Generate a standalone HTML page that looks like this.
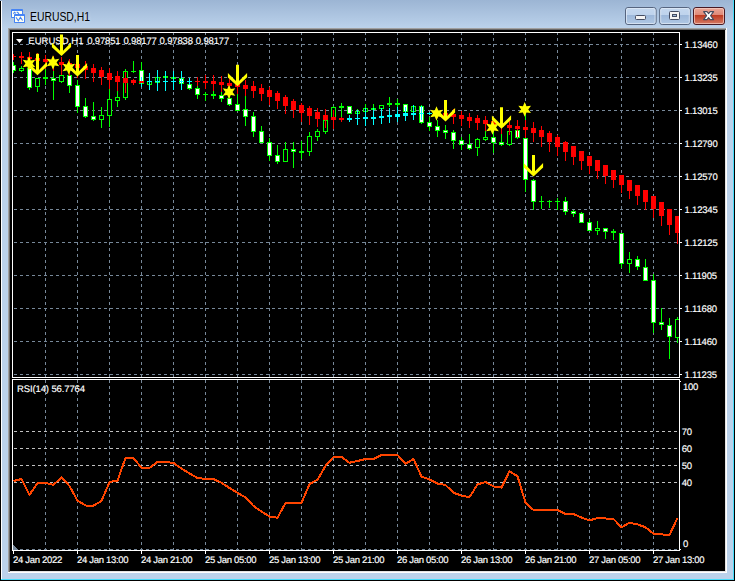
<!DOCTYPE html>
<html><head><meta charset="utf-8"><title>EURUSD,H1</title>
<style>
html,body{margin:0;padding:0;background:#fff;overflow:hidden}
#w{position:relative;width:737px;height:582px;overflow:hidden;background:#fff;font-family:"Liberation Sans",sans-serif}
#w svg{position:absolute;left:0;top:0}
.t{position:absolute;white-space:pre;font:9.5px/12px "Liberation Sans",sans-serif;color:#fff;text-rendering:geometricPrecision;-webkit-text-stroke:0.16px #fff}
#title{position:absolute;left:29.8px;top:9px;font-size:12px;line-height:16px;color:#000;white-space:pre;transform-origin:0 0;transform:scaleX(0.865);text-shadow:0 0 4px rgba(255,255,255,.6)}
</style></head><body>
<div id="w">
<svg width="737" height="582" viewBox="0 0 737 582" shape-rendering="crispEdges">
<defs>
<linearGradient id="tg" x1="0" y1="0" x2="0" y2="1"><stop offset="0" stop-color="#9cb5d4"/><stop offset="1" stop-color="#bbd2eb"/></linearGradient>
<linearGradient id="b1" x1="0" y1="0" x2="0" y2="1"><stop offset="0" stop-color="#c5d8ef"/><stop offset="0.45" stop-color="#bed3ec"/><stop offset="0.46" stop-color="#9db8da"/><stop offset="1" stop-color="#b1c9e5"/></linearGradient>
<linearGradient id="b2" x1="0" y1="0" x2="0" y2="1"><stop offset="0" stop-color="#ebaa9b"/><stop offset="0.45" stop-color="#de8776"/><stop offset="0.46" stop-color="#be3a20"/><stop offset="1" stop-color="#d67e68"/></linearGradient>
<clipPath id="cm"><rect x="13" y="33" width="666" height="344"/></clipPath>
</defs>
<!-- window frame -->
<rect x="0" y="0" width="735" height="581" fill="#000"/>
<rect x="1" y="0" width="733" height="580" fill="#bbd2eb"/>
<rect x="1" y="0" width="733" height="28" fill="url(#tg)"/>
<rect x="0" y="0" width="1" height="1" fill="#9cb5d4"/>
<rect x="1" y="1" width="1" height="579" fill="#fff"/>
<rect x="733" y="0" width="1" height="580" fill="#46dcfa"/>
<rect x="1" y="579" width="733" height="1" fill="#46dcfa"/>
<!-- client edge -->
<rect x="8" y="28" width="719" height="545" fill="#a0a0a0"/>
<rect x="9" y="29" width="718" height="544" fill="#696969"/>
<rect x="9" y="572" width="718" height="1" fill="#fff"/><rect x="726" y="29" width="1" height="544" fill="#fff"/>
<rect x="8" y="572" width="1" height="1" fill="#fff"/><rect x="726" y="28" width="1" height="1" fill="#fff"/>
<rect x="10" y="571" width="716" height="1" fill="#e3e3e3"/><rect x="725" y="30" width="1" height="542" fill="#e3e3e3"/>
<rect x="10" y="30" width="715" height="541" fill="#000"/>
<!-- caption buttons -->
<g shape-rendering="geometricPrecision">
<rect x="625.5" y="7.5" width="30.6" height="17" rx="2.5" fill="url(#b1)" stroke="#56657f"/>
<rect x="626.5" y="8.5" width="28.6" height="15" rx="1.5" fill="none" stroke="#e1ebf7" stroke-opacity=".75"/>
<rect x="635.5" y="15.5" width="10" height="4" rx="1" fill="#f4f4f4" stroke="#454d62"/>
<rect x="659.7" y="7.5" width="30.6" height="17" rx="2.5" fill="url(#b1)" stroke="#56657f"/>
<rect x="660.7" y="8.5" width="28.6" height="15" rx="1.5" fill="none" stroke="#e1ebf7" stroke-opacity=".75"/>
<rect x="669.5" y="11.5" width="10" height="8" rx="1" fill="#f4f4f4" stroke="#454d62"/>
<rect x="672.5" y="14.5" width="4" height="2" fill="#9db8da" stroke="#454d62"/>
<rect x="693.5" y="7.5" width="31" height="17" rx="2.5" fill="url(#b2)" stroke="#471923"/>
<rect x="694.5" y="8.5" width="29" height="15" rx="1.5" fill="none" stroke="#f6cfc5" stroke-opacity=".7"/>
<path d="M703.6 11.6 L707 11.6 L708.6 13.6 L710.2 11.6 L713.6 11.6 L710.6 15.6 L713.6 19.6 L710.2 19.6 L708.6 17.6 L707 19.6 L703.6 19.6 L706.6 15.6 Z" fill="#fff" stroke="#474b5e" stroke-width="1.1" stroke-linejoin="round"/>
<!-- icon -->
<rect x="11" y="9" width="12" height="9" rx="0.8" fill="#4684f4"/><rect x="12" y="11" width="10" height="6" fill="#fffff2"/>
<path d="M13.3 13.6 l1.3 -1.3 l1.2 1 M16.6 12.3 l1 0 l1.4 1.6" fill="none" stroke="#4684f4" stroke-width="1.1"/>
<rect x="14" y="14" width="11" height="9" rx="0.8" fill="#4684f4"/><rect x="15" y="16" width="9" height="6" fill="#fffff2"/>
<path d="M16 17.3 l2.3 3.4 l2.1 -3.4 l2.2 3.2" fill="none" stroke="#4684f4" stroke-width="1.1"/>
</g>
<line x1="14" y1="44.5" x2="679" y2="44.5" stroke="#778899" stroke-dasharray="3 3"/>
<line x1="14" y1="77.5" x2="679" y2="77.5" stroke="#778899" stroke-dasharray="3 3"/>
<line x1="14" y1="110.5" x2="679" y2="110.5" stroke="#778899" stroke-dasharray="3 3"/>
<line x1="14" y1="143.5" x2="679" y2="143.5" stroke="#778899" stroke-dasharray="3 3"/>
<line x1="14" y1="176.5" x2="679" y2="176.5" stroke="#778899" stroke-dasharray="3 3"/>
<line x1="14" y1="209.5" x2="679" y2="209.5" stroke="#778899" stroke-dasharray="3 3"/>
<line x1="14" y1="242.5" x2="679" y2="242.5" stroke="#778899" stroke-dasharray="3 3"/>
<line x1="14" y1="275.5" x2="679" y2="275.5" stroke="#778899" stroke-dasharray="3 3"/>
<line x1="14" y1="308.5" x2="679" y2="308.5" stroke="#778899" stroke-dasharray="3 3"/>
<line x1="14" y1="341.5" x2="679" y2="341.5" stroke="#778899" stroke-dasharray="3 3"/>
<line x1="14" y1="374.5" x2="679" y2="374.5" stroke="#778899" stroke-dasharray="3 3"/>
<line x1="45.5" y1="32" x2="45.5" y2="377" stroke="#778899" stroke-dasharray="3 3"/>
<line x1="45.5" y1="380" x2="45.5" y2="550" stroke="#778899" stroke-dasharray="3 3"/>
<line x1="77.5" y1="32" x2="77.5" y2="377" stroke="#778899" stroke-dasharray="3 3"/>
<line x1="77.5" y1="380" x2="77.5" y2="550" stroke="#778899" stroke-dasharray="3 3"/>
<line x1="109.5" y1="32" x2="109.5" y2="377" stroke="#778899" stroke-dasharray="3 3"/>
<line x1="109.5" y1="380" x2="109.5" y2="550" stroke="#778899" stroke-dasharray="3 3"/>
<line x1="141.5" y1="32" x2="141.5" y2="377" stroke="#778899" stroke-dasharray="3 3"/>
<line x1="141.5" y1="380" x2="141.5" y2="550" stroke="#778899" stroke-dasharray="3 3"/>
<line x1="173.5" y1="32" x2="173.5" y2="377" stroke="#778899" stroke-dasharray="3 3"/>
<line x1="173.5" y1="380" x2="173.5" y2="550" stroke="#778899" stroke-dasharray="3 3"/>
<line x1="205.5" y1="32" x2="205.5" y2="377" stroke="#778899" stroke-dasharray="3 3"/>
<line x1="205.5" y1="380" x2="205.5" y2="550" stroke="#778899" stroke-dasharray="3 3"/>
<line x1="237.5" y1="32" x2="237.5" y2="377" stroke="#778899" stroke-dasharray="3 3"/>
<line x1="237.5" y1="380" x2="237.5" y2="550" stroke="#778899" stroke-dasharray="3 3"/>
<line x1="269.5" y1="32" x2="269.5" y2="377" stroke="#778899" stroke-dasharray="3 3"/>
<line x1="269.5" y1="380" x2="269.5" y2="550" stroke="#778899" stroke-dasharray="3 3"/>
<line x1="301.5" y1="32" x2="301.5" y2="377" stroke="#778899" stroke-dasharray="3 3"/>
<line x1="301.5" y1="380" x2="301.5" y2="550" stroke="#778899" stroke-dasharray="3 3"/>
<line x1="333.5" y1="32" x2="333.5" y2="377" stroke="#778899" stroke-dasharray="3 3"/>
<line x1="333.5" y1="380" x2="333.5" y2="550" stroke="#778899" stroke-dasharray="3 3"/>
<line x1="365.5" y1="32" x2="365.5" y2="377" stroke="#778899" stroke-dasharray="3 3"/>
<line x1="365.5" y1="380" x2="365.5" y2="550" stroke="#778899" stroke-dasharray="3 3"/>
<line x1="397.5" y1="32" x2="397.5" y2="377" stroke="#778899" stroke-dasharray="3 3"/>
<line x1="397.5" y1="380" x2="397.5" y2="550" stroke="#778899" stroke-dasharray="3 3"/>
<line x1="429.5" y1="32" x2="429.5" y2="377" stroke="#778899" stroke-dasharray="3 3"/>
<line x1="429.5" y1="380" x2="429.5" y2="550" stroke="#778899" stroke-dasharray="3 3"/>
<line x1="461.5" y1="32" x2="461.5" y2="377" stroke="#778899" stroke-dasharray="3 3"/>
<line x1="461.5" y1="380" x2="461.5" y2="550" stroke="#778899" stroke-dasharray="3 3"/>
<line x1="493.5" y1="32" x2="493.5" y2="377" stroke="#778899" stroke-dasharray="3 3"/>
<line x1="493.5" y1="380" x2="493.5" y2="550" stroke="#778899" stroke-dasharray="3 3"/>
<line x1="525.5" y1="32" x2="525.5" y2="377" stroke="#778899" stroke-dasharray="3 3"/>
<line x1="525.5" y1="380" x2="525.5" y2="550" stroke="#778899" stroke-dasharray="3 3"/>
<line x1="557.5" y1="32" x2="557.5" y2="377" stroke="#778899" stroke-dasharray="3 3"/>
<line x1="557.5" y1="380" x2="557.5" y2="550" stroke="#778899" stroke-dasharray="3 3"/>
<line x1="589.5" y1="32" x2="589.5" y2="377" stroke="#778899" stroke-dasharray="3 3"/>
<line x1="589.5" y1="380" x2="589.5" y2="550" stroke="#778899" stroke-dasharray="3 3"/>
<line x1="621.5" y1="32" x2="621.5" y2="377" stroke="#778899" stroke-dasharray="3 3"/>
<line x1="621.5" y1="380" x2="621.5" y2="550" stroke="#778899" stroke-dasharray="3 3"/>
<line x1="653.5" y1="32" x2="653.5" y2="377" stroke="#778899" stroke-dasharray="3 3"/>
<line x1="653.5" y1="380" x2="653.5" y2="550" stroke="#778899" stroke-dasharray="3 3"/>
<line x1="14" y1="431.5" x2="679" y2="431.5" stroke="#c0c0c0" stroke-dasharray="3 3"/>
<line x1="14" y1="448.5" x2="679" y2="448.5" stroke="#c0c0c0" stroke-dasharray="3 3"/>
<line x1="14" y1="465.5" x2="679" y2="465.5" stroke="#c0c0c0" stroke-dasharray="3 3"/>
<line x1="14" y1="482.5" x2="679" y2="482.5" stroke="#c0c0c0" stroke-dasharray="3 3"/>
<line x1="14" y1="549.5" x2="679" y2="549.5" stroke="#778899" stroke-dasharray="3 3"/>
<g clip-path="url(#cm)">
<rect x="13" y="62" width="1" height="11" fill="#00ff00"/>
<rect x="11" y="65" width="5" height="6" fill="#00ff00"/>
<rect x="12" y="66" width="3" height="4" fill="#ffffff"/>
<rect x="21" y="66" width="1" height="6" fill="#00ff00"/>
<rect x="19" y="68" width="5" height="3" fill="#00ff00"/>
<rect x="20" y="69" width="3" height="1" fill="#000"/>
<rect x="29" y="64" width="1" height="26" fill="#00ff00"/>
<rect x="27" y="68" width="5" height="20" fill="#00ff00"/>
<rect x="28" y="69" width="3" height="18" fill="#ffffff"/>
<rect x="37" y="78" width="1" height="14" fill="#00ff00"/>
<rect x="35" y="78" width="5" height="9" fill="#00ff00"/>
<rect x="36" y="79" width="3" height="7" fill="#000"/>
<rect x="45" y="69" width="1" height="16" fill="#00ff00"/>
<rect x="43" y="77" width="5" height="2" fill="#00ff00"/>
<rect x="53" y="69" width="1" height="31" fill="#00ff00"/>
<rect x="51" y="78" width="5" height="3" fill="#00ff00"/>
<rect x="52" y="79" width="3" height="1" fill="#ffffff"/>
<rect x="61" y="73" width="1" height="10" fill="#00ff00"/>
<rect x="59" y="75" width="5" height="7" fill="#00ff00"/>
<rect x="60" y="76" width="3" height="5" fill="#000"/>
<rect x="69" y="72" width="1" height="21" fill="#00ff00"/>
<rect x="67" y="75" width="5" height="11" fill="#00ff00"/>
<rect x="68" y="76" width="3" height="9" fill="#ffffff"/>
<rect x="77" y="80" width="1" height="33" fill="#00ff00"/>
<rect x="75" y="85" width="5" height="22" fill="#00ff00"/>
<rect x="76" y="86" width="3" height="20" fill="#ffffff"/>
<rect x="85" y="98" width="1" height="20" fill="#00ff00"/>
<rect x="83" y="106" width="5" height="11" fill="#00ff00"/>
<rect x="84" y="107" width="3" height="9" fill="#ffffff"/>
<rect x="93" y="102" width="1" height="19" fill="#00ff00"/>
<rect x="91" y="116" width="5" height="4" fill="#00ff00"/>
<rect x="92" y="117" width="3" height="2" fill="#ffffff"/>
<rect x="101" y="107" width="1" height="21" fill="#00ff00"/>
<rect x="99" y="115" width="5" height="5" fill="#00ff00"/>
<rect x="100" y="116" width="3" height="3" fill="#000"/>
<rect x="109" y="89" width="1" height="38" fill="#00ff00"/>
<rect x="107" y="99" width="5" height="17" fill="#00ff00"/>
<rect x="108" y="100" width="3" height="15" fill="#000"/>
<rect x="117" y="91" width="1" height="16" fill="#00ff00"/>
<rect x="115" y="97" width="5" height="4" fill="#00ff00"/>
<rect x="116" y="98" width="3" height="2" fill="#000"/>
<rect x="125" y="69" width="1" height="31" fill="#00ff00"/>
<rect x="123" y="71" width="5" height="27" fill="#00ff00"/>
<rect x="124" y="72" width="3" height="25" fill="#000"/>
<rect x="133" y="61" width="1" height="12" fill="#00ff00"/>
<rect x="131" y="71" width="5" height="1" fill="#00ff00"/>
<rect x="141" y="62" width="1" height="25" fill="#00ff00"/>
<rect x="139" y="70" width="5" height="14" fill="#00ff00"/>
<rect x="140" y="71" width="3" height="12" fill="#ffffff"/>
<rect x="149" y="79" width="1" height="8" fill="#00ff00"/>
<rect x="147" y="81" width="5" height="4" fill="#00ff00"/>
<rect x="148" y="82" width="3" height="2" fill="#000"/>
<rect x="157" y="75" width="1" height="10" fill="#00ff00"/>
<rect x="155" y="77" width="5" height="6" fill="#00ff00"/>
<rect x="156" y="78" width="3" height="4" fill="#000"/>
<rect x="165" y="74" width="1" height="6" fill="#00ff00"/>
<rect x="163" y="76" width="5" height="2" fill="#00ff00"/>
<rect x="173" y="75" width="1" height="6" fill="#00ff00"/>
<rect x="171" y="77" width="5" height="2" fill="#00ff00"/>
<rect x="181" y="76" width="1" height="9" fill="#00ff00"/>
<rect x="179" y="78" width="5" height="6" fill="#00ff00"/>
<rect x="180" y="79" width="3" height="4" fill="#ffffff"/>
<rect x="189" y="82" width="1" height="8" fill="#00ff00"/>
<rect x="187" y="84" width="5" height="5" fill="#00ff00"/>
<rect x="188" y="85" width="3" height="3" fill="#ffffff"/>
<rect x="197" y="85" width="1" height="14" fill="#00ff00"/>
<rect x="195" y="88" width="5" height="7" fill="#00ff00"/>
<rect x="196" y="89" width="3" height="5" fill="#ffffff"/>
<rect x="205" y="92" width="1" height="9" fill="#00ff00"/>
<rect x="203" y="94" width="5" height="1" fill="#00ff00"/>
<rect x="213" y="91" width="1" height="8" fill="#00ff00"/>
<rect x="211" y="94" width="5" height="2" fill="#00ff00"/>
<rect x="221" y="92" width="1" height="10" fill="#00ff00"/>
<rect x="219" y="95" width="5" height="4" fill="#00ff00"/>
<rect x="220" y="96" width="3" height="2" fill="#ffffff"/>
<rect x="229" y="96" width="1" height="10" fill="#00ff00"/>
<rect x="227" y="98" width="5" height="7" fill="#00ff00"/>
<rect x="228" y="99" width="3" height="5" fill="#ffffff"/>
<rect x="237" y="94" width="1" height="17" fill="#00ff00"/>
<rect x="235" y="104" width="5" height="7" fill="#00ff00"/>
<rect x="236" y="105" width="3" height="5" fill="#ffffff"/>
<rect x="245" y="96" width="1" height="30" fill="#00ff00"/>
<rect x="243" y="109" width="5" height="8" fill="#00ff00"/>
<rect x="244" y="110" width="3" height="6" fill="#ffffff"/>
<rect x="253" y="112" width="1" height="25" fill="#00ff00"/>
<rect x="251" y="116" width="5" height="16" fill="#00ff00"/>
<rect x="252" y="117" width="3" height="14" fill="#ffffff"/>
<rect x="261" y="126" width="1" height="17" fill="#00ff00"/>
<rect x="259" y="131" width="5" height="12" fill="#00ff00"/>
<rect x="260" y="132" width="3" height="10" fill="#ffffff"/>
<rect x="269" y="138" width="1" height="23" fill="#00ff00"/>
<rect x="267" y="142" width="5" height="14" fill="#00ff00"/>
<rect x="268" y="143" width="3" height="12" fill="#ffffff"/>
<rect x="277" y="145" width="1" height="19" fill="#00ff00"/>
<rect x="275" y="155" width="5" height="7" fill="#00ff00"/>
<rect x="276" y="156" width="3" height="5" fill="#ffffff"/>
<rect x="285" y="142" width="1" height="20" fill="#00ff00"/>
<rect x="283" y="149" width="5" height="13" fill="#00ff00"/>
<rect x="284" y="150" width="3" height="11" fill="#000"/>
<rect x="293" y="142" width="1" height="26" fill="#00ff00"/>
<rect x="291" y="149" width="5" height="3" fill="#00ff00"/>
<rect x="292" y="150" width="3" height="1" fill="#ffffff"/>
<rect x="301" y="141" width="1" height="18" fill="#00ff00"/>
<rect x="299" y="151" width="5" height="2" fill="#00ff00"/>
<rect x="309" y="132" width="1" height="24" fill="#00ff00"/>
<rect x="307" y="136" width="5" height="16" fill="#00ff00"/>
<rect x="308" y="137" width="3" height="14" fill="#000"/>
<rect x="317" y="129" width="1" height="12" fill="#00ff00"/>
<rect x="315" y="131" width="5" height="6" fill="#00ff00"/>
<rect x="316" y="132" width="3" height="4" fill="#000"/>
<rect x="325" y="109" width="1" height="25" fill="#00ff00"/>
<rect x="323" y="120" width="5" height="12" fill="#00ff00"/>
<rect x="324" y="121" width="3" height="10" fill="#000"/>
<rect x="333" y="106" width="1" height="12" fill="#00ff00"/>
<rect x="331" y="107" width="5" height="11" fill="#00ff00"/>
<rect x="332" y="108" width="3" height="9" fill="#000"/>
<rect x="341" y="103" width="1" height="15" fill="#00ff00"/>
<rect x="339" y="106" width="5" height="2" fill="#00ff00"/>
<rect x="349" y="106" width="1" height="8" fill="#00ff00"/>
<rect x="347" y="106" width="5" height="8" fill="#00ff00"/>
<rect x="348" y="107" width="3" height="6" fill="#ffffff"/>
<rect x="357" y="109" width="1" height="5" fill="#00ff00"/>
<rect x="355" y="111" width="5" height="3" fill="#00ff00"/>
<rect x="356" y="112" width="3" height="1" fill="#000"/>
<rect x="365" y="104" width="1" height="8" fill="#00ff00"/>
<rect x="363" y="108" width="5" height="4" fill="#00ff00"/>
<rect x="364" y="109" width="3" height="2" fill="#000"/>
<rect x="373" y="104" width="1" height="7" fill="#00ff00"/>
<rect x="371" y="108" width="5" height="2" fill="#00ff00"/>
<rect x="381" y="105" width="1" height="4" fill="#00ff00"/>
<rect x="379" y="105" width="5" height="4" fill="#00ff00"/>
<rect x="380" y="106" width="3" height="2" fill="#000"/>
<rect x="389" y="97" width="1" height="10" fill="#00ff00"/>
<rect x="387" y="103" width="5" height="2" fill="#00ff00"/>
<rect x="397" y="99" width="1" height="8" fill="#00ff00"/>
<rect x="395" y="103" width="5" height="2" fill="#00ff00"/>
<rect x="405" y="104" width="1" height="8" fill="#00ff00"/>
<rect x="403" y="104" width="5" height="8" fill="#00ff00"/>
<rect x="404" y="105" width="3" height="6" fill="#ffffff"/>
<rect x="413" y="105" width="1" height="7" fill="#00ff00"/>
<rect x="411" y="106" width="5" height="6" fill="#00ff00"/>
<rect x="412" y="107" width="3" height="4" fill="#000"/>
<rect x="421" y="105" width="1" height="19" fill="#00ff00"/>
<rect x="419" y="106" width="5" height="17" fill="#00ff00"/>
<rect x="420" y="107" width="3" height="15" fill="#ffffff"/>
<rect x="429" y="117" width="1" height="14" fill="#00ff00"/>
<rect x="427" y="122" width="5" height="5" fill="#00ff00"/>
<rect x="428" y="123" width="3" height="3" fill="#ffffff"/>
<rect x="437" y="120" width="1" height="17" fill="#00ff00"/>
<rect x="435" y="126" width="5" height="5" fill="#00ff00"/>
<rect x="436" y="127" width="3" height="3" fill="#ffffff"/>
<rect x="445" y="125" width="1" height="14" fill="#00ff00"/>
<rect x="443" y="130" width="5" height="3" fill="#00ff00"/>
<rect x="444" y="131" width="3" height="1" fill="#ffffff"/>
<rect x="453" y="130" width="1" height="19" fill="#00ff00"/>
<rect x="451" y="132" width="5" height="9" fill="#00ff00"/>
<rect x="452" y="133" width="3" height="7" fill="#ffffff"/>
<rect x="461" y="137" width="1" height="13" fill="#00ff00"/>
<rect x="459" y="140" width="5" height="5" fill="#00ff00"/>
<rect x="460" y="141" width="3" height="3" fill="#ffffff"/>
<rect x="469" y="134" width="1" height="16" fill="#00ff00"/>
<rect x="467" y="144" width="5" height="5" fill="#00ff00"/>
<rect x="468" y="145" width="3" height="3" fill="#ffffff"/>
<rect x="477" y="138" width="1" height="18" fill="#00ff00"/>
<rect x="475" y="139" width="5" height="9" fill="#00ff00"/>
<rect x="476" y="140" width="3" height="7" fill="#000"/>
<rect x="485" y="131" width="1" height="10" fill="#00ff00"/>
<rect x="483" y="137" width="5" height="3" fill="#00ff00"/>
<rect x="484" y="138" width="3" height="1" fill="#000"/>
<rect x="493" y="130" width="1" height="23" fill="#00ff00"/>
<rect x="491" y="137" width="5" height="6" fill="#00ff00"/>
<rect x="492" y="138" width="3" height="4" fill="#ffffff"/>
<rect x="501" y="134" width="1" height="12" fill="#00ff00"/>
<rect x="499" y="142" width="5" height="3" fill="#00ff00"/>
<rect x="500" y="143" width="3" height="1" fill="#ffffff"/>
<rect x="509" y="129" width="1" height="17" fill="#00ff00"/>
<rect x="507" y="131" width="5" height="14" fill="#00ff00"/>
<rect x="508" y="132" width="3" height="12" fill="#000"/>
<rect x="517" y="128" width="1" height="11" fill="#00ff00"/>
<rect x="515" y="130" width="5" height="8" fill="#00ff00"/>
<rect x="516" y="131" width="3" height="6" fill="#ffffff"/>
<rect x="525" y="114" width="1" height="78" fill="#00ff00"/>
<rect x="523" y="138" width="5" height="42" fill="#00ff00"/>
<rect x="524" y="139" width="3" height="40" fill="#ffffff"/>
<rect x="533" y="179" width="1" height="31" fill="#00ff00"/>
<rect x="531" y="180" width="5" height="22" fill="#00ff00"/>
<rect x="532" y="181" width="3" height="20" fill="#ffffff"/>
<rect x="541" y="196" width="1" height="13" fill="#00ff00"/>
<rect x="539" y="201" width="5" height="1" fill="#00ff00"/>
<rect x="549" y="200" width="1" height="8" fill="#00ff00"/>
<rect x="547" y="201" width="5" height="1" fill="#00ff00"/>
<rect x="557" y="198" width="1" height="12" fill="#00ff00"/>
<rect x="555" y="201" width="5" height="1" fill="#00ff00"/>
<rect x="565" y="197" width="1" height="18" fill="#00ff00"/>
<rect x="563" y="201" width="5" height="11" fill="#00ff00"/>
<rect x="564" y="202" width="3" height="9" fill="#ffffff"/>
<rect x="573" y="210" width="1" height="7" fill="#00ff00"/>
<rect x="571" y="211" width="5" height="3" fill="#00ff00"/>
<rect x="572" y="212" width="3" height="1" fill="#ffffff"/>
<rect x="581" y="212" width="1" height="11" fill="#00ff00"/>
<rect x="579" y="213" width="5" height="10" fill="#00ff00"/>
<rect x="580" y="214" width="3" height="8" fill="#ffffff"/>
<rect x="589" y="219" width="1" height="12" fill="#00ff00"/>
<rect x="587" y="222" width="5" height="9" fill="#00ff00"/>
<rect x="588" y="223" width="3" height="7" fill="#ffffff"/>
<rect x="597" y="221" width="1" height="14" fill="#00ff00"/>
<rect x="595" y="228" width="5" height="3" fill="#00ff00"/>
<rect x="596" y="229" width="3" height="1" fill="#000"/>
<rect x="605" y="228" width="1" height="11" fill="#00ff00"/>
<rect x="603" y="228" width="5" height="4" fill="#00ff00"/>
<rect x="604" y="229" width="3" height="2" fill="#ffffff"/>
<rect x="613" y="229" width="1" height="11" fill="#00ff00"/>
<rect x="611" y="231" width="5" height="2" fill="#00ff00"/>
<rect x="621" y="233" width="1" height="35" fill="#00ff00"/>
<rect x="619" y="233" width="5" height="31" fill="#00ff00"/>
<rect x="620" y="234" width="3" height="29" fill="#ffffff"/>
<rect x="629" y="252" width="1" height="21" fill="#00ff00"/>
<rect x="627" y="259" width="5" height="5" fill="#00ff00"/>
<rect x="628" y="260" width="3" height="3" fill="#000"/>
<rect x="637" y="256" width="1" height="14" fill="#00ff00"/>
<rect x="635" y="259" width="5" height="8" fill="#00ff00"/>
<rect x="636" y="260" width="3" height="6" fill="#ffffff"/>
<rect x="645" y="259" width="1" height="22" fill="#00ff00"/>
<rect x="643" y="267" width="5" height="14" fill="#00ff00"/>
<rect x="644" y="268" width="3" height="12" fill="#ffffff"/>
<rect x="653" y="274" width="1" height="59" fill="#00ff00"/>
<rect x="651" y="280" width="5" height="43" fill="#00ff00"/>
<rect x="652" y="281" width="3" height="41" fill="#ffffff"/>
<rect x="661" y="308" width="1" height="22" fill="#00ff00"/>
<rect x="659" y="322" width="5" height="3" fill="#00ff00"/>
<rect x="660" y="323" width="3" height="1" fill="#ffffff"/>
<rect x="669" y="318" width="1" height="41" fill="#00ff00"/>
<rect x="667" y="325" width="5" height="12" fill="#00ff00"/>
<rect x="668" y="326" width="3" height="10" fill="#ffffff"/>
<rect x="677" y="317" width="1" height="26" fill="#00ff00"/>
<rect x="675" y="319" width="5" height="19" fill="#00ff00"/>
<rect x="676" y="320" width="3" height="17" fill="#000"/>
<rect x="13" y="54" width="1" height="6" fill="#ff0000"/>
<rect x="11" y="56" width="5" height="1" fill="#ff0000"/>
<rect x="21" y="52" width="1" height="12" fill="#ff0000"/>
<rect x="19" y="56" width="5" height="2" fill="#ff0000"/>
<rect x="29" y="52" width="1" height="14" fill="#ff0000"/>
<rect x="27" y="57" width="5" height="2" fill="#ff0000"/>
<rect x="37" y="53" width="1" height="15" fill="#ff0000"/>
<rect x="35" y="58" width="5" height="3" fill="#ff0000"/>
<rect x="45" y="55" width="1" height="14" fill="#ff0000"/>
<rect x="43" y="59" width="5" height="3" fill="#ff0000"/>
<rect x="53" y="56" width="1" height="15" fill="#ff0000"/>
<rect x="51" y="60" width="5" height="3" fill="#ff0000"/>
<rect x="61" y="57" width="1" height="18" fill="#ff0000"/>
<rect x="59" y="62" width="5" height="3" fill="#ff0000"/>
<rect x="69" y="59" width="1" height="17" fill="#ff0000"/>
<rect x="67" y="63" width="5" height="4" fill="#ff0000"/>
<rect x="77" y="60" width="1" height="18" fill="#ff0000"/>
<rect x="75" y="64" width="5" height="4" fill="#ff0000"/>
<rect x="85" y="61" width="1" height="18" fill="#ff0000"/>
<rect x="83" y="66" width="5" height="4" fill="#ff0000"/>
<rect x="93" y="64" width="1" height="18" fill="#ff0000"/>
<rect x="91" y="68" width="5" height="5" fill="#ff0000"/>
<rect x="101" y="67" width="1" height="18" fill="#ff0000"/>
<rect x="99" y="70" width="5" height="7" fill="#ff0000"/>
<rect x="109" y="68" width="1" height="21" fill="#ff0000"/>
<rect x="107" y="73" width="5" height="7" fill="#ff0000"/>
<rect x="117" y="71" width="1" height="20" fill="#ff0000"/>
<rect x="115" y="76" width="5" height="6" fill="#ff0000"/>
<rect x="125" y="72" width="1" height="21" fill="#ff0000"/>
<rect x="123" y="78" width="5" height="5" fill="#ff0000"/>
<rect x="133" y="79" width="1" height="6" fill="#ff0000"/>
<rect x="131" y="80" width="5" height="3" fill="#ff0000"/>
<rect x="141" y="77" width="1" height="10" fill="#00ffff"/>
<rect x="139" y="81" width="5" height="2" fill="#ff0000"/>
<rect x="149" y="73" width="1" height="17" fill="#00ffff"/>
<rect x="147" y="81" width="5" height="1" fill="#00ffff"/>
<rect x="157" y="70" width="1" height="21" fill="#00ffff"/>
<rect x="155" y="81" width="5" height="1" fill="#00ffff"/>
<rect x="165" y="71" width="1" height="20" fill="#00ffff"/>
<rect x="163" y="81" width="5" height="1" fill="#00ffff"/>
<rect x="173" y="71" width="1" height="19" fill="#00ffff"/>
<rect x="171" y="81" width="5" height="1" fill="#00ffff"/>
<rect x="181" y="71" width="1" height="19" fill="#00ffff"/>
<rect x="179" y="81" width="5" height="1" fill="#00ffff"/>
<rect x="189" y="78" width="1" height="7" fill="#00ffff"/>
<rect x="187" y="81" width="5" height="1" fill="#00ffff"/>
<rect x="197" y="77" width="1" height="9" fill="#ff0000"/>
<rect x="195" y="81" width="5" height="1" fill="#ff0000"/>
<rect x="205" y="75" width="1" height="14" fill="#ff0000"/>
<rect x="203" y="81" width="5" height="2" fill="#ff0000"/>
<rect x="213" y="75" width="1" height="16" fill="#ff0000"/>
<rect x="211" y="81" width="5" height="3" fill="#ff0000"/>
<rect x="221" y="76" width="1" height="16" fill="#ff0000"/>
<rect x="219" y="82" width="5" height="3" fill="#ff0000"/>
<rect x="229" y="79" width="1" height="14" fill="#ff0000"/>
<rect x="227" y="83" width="5" height="3" fill="#ff0000"/>
<rect x="237" y="80" width="1" height="14" fill="#ff0000"/>
<rect x="235" y="84" width="5" height="3" fill="#ff0000"/>
<rect x="245" y="80" width="1" height="16" fill="#ff0000"/>
<rect x="243" y="85" width="5" height="4" fill="#ff0000"/>
<rect x="253" y="81" width="1" height="17" fill="#ff0000"/>
<rect x="251" y="86" width="5" height="5" fill="#ff0000"/>
<rect x="261" y="84" width="1" height="17" fill="#ff0000"/>
<rect x="259" y="88" width="5" height="6" fill="#ff0000"/>
<rect x="269" y="87" width="1" height="18" fill="#ff0000"/>
<rect x="267" y="90" width="5" height="7" fill="#ff0000"/>
<rect x="277" y="91" width="1" height="18" fill="#ff0000"/>
<rect x="275" y="93" width="5" height="8" fill="#ff0000"/>
<rect x="285" y="95" width="1" height="19" fill="#ff0000"/>
<rect x="283" y="97" width="5" height="9" fill="#ff0000"/>
<rect x="293" y="99" width="1" height="19" fill="#ff0000"/>
<rect x="291" y="101" width="5" height="9" fill="#ff0000"/>
<rect x="301" y="103" width="1" height="19" fill="#ff0000"/>
<rect x="299" y="105" width="5" height="8" fill="#ff0000"/>
<rect x="309" y="106" width="1" height="19" fill="#ff0000"/>
<rect x="307" y="108" width="5" height="8" fill="#ff0000"/>
<rect x="317" y="108" width="1" height="19" fill="#ff0000"/>
<rect x="315" y="112" width="5" height="7" fill="#ff0000"/>
<rect x="325" y="109" width="1" height="19" fill="#ff0000"/>
<rect x="323" y="115" width="5" height="5" fill="#ff0000"/>
<rect x="333" y="110" width="1" height="19" fill="#ff0000"/>
<rect x="331" y="117" width="5" height="3" fill="#ff0000"/>
<rect x="341" y="117" width="1" height="5" fill="#ff0000"/>
<rect x="339" y="118" width="5" height="2" fill="#ff0000"/>
<rect x="349" y="115" width="1" height="7" fill="#00ffff"/>
<rect x="347" y="118" width="5" height="2" fill="#00ffff"/>
<rect x="357" y="110" width="1" height="15" fill="#00ffff"/>
<rect x="355" y="118" width="5" height="1" fill="#00ffff"/>
<rect x="365" y="108" width="1" height="18" fill="#00ffff"/>
<rect x="363" y="117" width="5" height="2" fill="#00ffff"/>
<rect x="373" y="108" width="1" height="17" fill="#00ffff"/>
<rect x="371" y="117" width="5" height="2" fill="#00ffff"/>
<rect x="381" y="108" width="1" height="16" fill="#00ffff"/>
<rect x="379" y="116" width="5" height="2" fill="#00ffff"/>
<rect x="389" y="108" width="1" height="15" fill="#00ffff"/>
<rect x="387" y="115" width="5" height="2" fill="#00ffff"/>
<rect x="397" y="107" width="1" height="15" fill="#00ffff"/>
<rect x="395" y="114" width="5" height="3" fill="#00ffff"/>
<rect x="405" y="107" width="1" height="14" fill="#00ffff"/>
<rect x="403" y="113" width="5" height="3" fill="#00ffff"/>
<rect x="413" y="105" width="1" height="15" fill="#00ffff"/>
<rect x="411" y="113" width="5" height="2" fill="#00ffff"/>
<rect x="421" y="106" width="1" height="14" fill="#00ffff"/>
<rect x="419" y="113" width="5" height="1" fill="#00ffff"/>
<rect x="429" y="112" width="1" height="3" fill="#00ffff"/>
<rect x="427" y="113" width="5" height="1" fill="#00ffff"/>
<rect x="437" y="110" width="1" height="8" fill="#ff0000"/>
<rect x="435" y="113" width="5" height="2" fill="#ff0000"/>
<rect x="445" y="109" width="1" height="12" fill="#ff0000"/>
<rect x="443" y="113" width="5" height="3" fill="#ff0000"/>
<rect x="453" y="109" width="1" height="15" fill="#ff0000"/>
<rect x="451" y="114" width="5" height="3" fill="#ff0000"/>
<rect x="461" y="111" width="1" height="15" fill="#ff0000"/>
<rect x="459" y="115" width="5" height="4" fill="#ff0000"/>
<rect x="469" y="113" width="1" height="15" fill="#ff0000"/>
<rect x="467" y="117" width="5" height="4" fill="#ff0000"/>
<rect x="477" y="115" width="1" height="15" fill="#ff0000"/>
<rect x="475" y="118" width="5" height="5" fill="#ff0000"/>
<rect x="485" y="116" width="1" height="15" fill="#ff0000"/>
<rect x="483" y="120" width="5" height="4" fill="#ff0000"/>
<rect x="493" y="117" width="1" height="14" fill="#ff0000"/>
<rect x="491" y="121" width="5" height="4" fill="#ff0000"/>
<rect x="501" y="118" width="1" height="16" fill="#ff0000"/>
<rect x="499" y="123" width="5" height="4" fill="#ff0000"/>
<rect x="509" y="121" width="1" height="14" fill="#ff0000"/>
<rect x="507" y="125" width="5" height="3" fill="#ff0000"/>
<rect x="517" y="120" width="1" height="17" fill="#ff0000"/>
<rect x="515" y="126" width="5" height="3" fill="#ff0000"/>
<rect x="525" y="120" width="1" height="18" fill="#ff0000"/>
<rect x="523" y="127" width="5" height="3" fill="#ff0000"/>
<rect x="533" y="122" width="1" height="20" fill="#ff0000"/>
<rect x="531" y="128" width="5" height="5" fill="#ff0000"/>
<rect x="541" y="126" width="1" height="21" fill="#ff0000"/>
<rect x="539" y="130" width="5" height="7" fill="#ff0000"/>
<rect x="549" y="131" width="1" height="21" fill="#ff0000"/>
<rect x="547" y="133" width="5" height="9" fill="#ff0000"/>
<rect x="557" y="135" width="1" height="21" fill="#ff0000"/>
<rect x="555" y="137" width="5" height="10" fill="#ff0000"/>
<rect x="565" y="141" width="1" height="20" fill="#ff0000"/>
<rect x="563" y="142" width="5" height="10" fill="#ff0000"/>
<rect x="573" y="146" width="1" height="19" fill="#ff0000"/>
<rect x="571" y="146" width="5" height="11" fill="#ff0000"/>
<rect x="581" y="151" width="1" height="19" fill="#ff0000"/>
<rect x="579" y="151" width="5" height="10" fill="#ff0000"/>
<rect x="589" y="156" width="1" height="18" fill="#ff0000"/>
<rect x="587" y="156" width="5" height="10" fill="#ff0000"/>
<rect x="597" y="160" width="1" height="19" fill="#ff0000"/>
<rect x="595" y="160" width="5" height="11" fill="#ff0000"/>
<rect x="605" y="165" width="1" height="19" fill="#ff0000"/>
<rect x="603" y="165" width="5" height="11" fill="#ff0000"/>
<rect x="613" y="170" width="1" height="18" fill="#ff0000"/>
<rect x="611" y="170" width="5" height="10" fill="#ff0000"/>
<rect x="621" y="175" width="1" height="18" fill="#ff0000"/>
<rect x="619" y="175" width="5" height="10" fill="#ff0000"/>
<rect x="629" y="180" width="1" height="19" fill="#ff0000"/>
<rect x="627" y="180" width="5" height="11" fill="#ff0000"/>
<rect x="637" y="185" width="1" height="20" fill="#ff0000"/>
<rect x="635" y="185" width="5" height="11" fill="#ff0000"/>
<rect x="645" y="190" width="1" height="20" fill="#ff0000"/>
<rect x="643" y="190" width="5" height="12" fill="#ff0000"/>
<rect x="653" y="196" width="1" height="22" fill="#ff0000"/>
<rect x="651" y="196" width="5" height="13" fill="#ff0000"/>
<rect x="661" y="202" width="1" height="24" fill="#ff0000"/>
<rect x="659" y="202" width="5" height="14" fill="#ff0000"/>
<rect x="669" y="209" width="1" height="26" fill="#ff0000"/>
<rect x="667" y="209" width="5" height="16" fill="#ff0000"/>
<rect x="677" y="216" width="1" height="28" fill="#ff0000"/>
<rect x="675" y="216" width="5" height="17" fill="#ff0000"/>
</g>
<polyline points="13.5,481 21.5,479 29.5,494.75 37.5,483 45.5,483 53.5,484.75 61.5,477.5 69.5,486 77.5,500.6 85.5,505.5 93.5,505.5 101.5,501 109.5,482 117.5,480.6 125.5,458 133.5,458 141.5,467.75 149.5,467.75 157.5,462 165.5,462 173.5,463 181.5,468.5 189.5,473.5 197.5,478 205.5,479 213.5,479 221.5,482.75 229.5,488 237.5,492.75 245.5,497.5 253.5,506 261.5,511.5 269.5,516.5 277.5,517.75 285.5,503 293.5,503 301.5,503 309.5,484 317.5,479.75 325.5,466 333.5,457 341.5,457 349.5,462.75 357.5,461 365.5,459 373.5,459 381.5,455 389.5,455 397.5,455 405.5,463.75 413.5,459 421.5,476.5 429.5,479.4 437.5,483.5 445.5,485 453.5,492.75 461.5,495.6 469.5,497.25 477.5,484.4 485.5,482 493.5,486.4 501.5,487.6 509.5,471.25 517.5,476.25 525.5,502.5 533.5,510 541.5,510 549.5,510 557.5,510 565.5,514 573.5,514 581.5,517.5 589.5,520.5 597.5,518 605.5,518.5 613.5,519 621.5,527.25 629.5,522.75 637.5,524.4 645.5,527.25 653.5,533.75 661.5,534.4 669.5,535 677.5,518" fill="none" stroke="#ff4500" stroke-width="2" stroke-linejoin="round" shape-rendering="crispEdges"/>
<polygon points="13,545 13,550 18.5,550" fill="#778899"/>
<rect x="12" y="32" width="668" height="1" fill="#ffffff"/>
<rect x="12" y="377" width="668" height="1" fill="#ffffff"/>
<rect x="12" y="32" width="1" height="346" fill="#ffffff"/>
<rect x="679" y="32" width="1" height="346" fill="#ffffff"/>
<rect x="12" y="379" width="668" height="1" fill="#ffffff"/>
<rect x="12" y="550" width="668" height="1" fill="#ffffff"/>
<rect x="12" y="379" width="1" height="172" fill="#ffffff"/>
<rect x="679" y="379" width="1" height="172" fill="#ffffff"/>
<rect x="680" y="44" width="2" height="1" fill="#ffffff"/>
<rect x="680" y="77" width="2" height="1" fill="#ffffff"/>
<rect x="680" y="110" width="2" height="1" fill="#ffffff"/>
<rect x="680" y="143" width="2" height="1" fill="#ffffff"/>
<rect x="680" y="176" width="2" height="1" fill="#ffffff"/>
<rect x="680" y="209" width="2" height="1" fill="#ffffff"/>
<rect x="680" y="242" width="2" height="1" fill="#ffffff"/>
<rect x="680" y="275" width="2" height="1" fill="#ffffff"/>
<rect x="680" y="308" width="2" height="1" fill="#ffffff"/>
<rect x="680" y="341" width="2" height="1" fill="#ffffff"/>
<rect x="680" y="374" width="2" height="1" fill="#ffffff"/>
<rect x="680" y="381" width="1" height="1" fill="#ffffff"/>
<rect x="680" y="549" width="1" height="1" fill="#ffffff"/>
<rect x="13" y="551" width="1" height="3" fill="#ffffff"/>
<rect x="77" y="551" width="1" height="3" fill="#ffffff"/>
<rect x="141" y="551" width="1" height="3" fill="#ffffff"/>
<rect x="205" y="551" width="1" height="3" fill="#ffffff"/>
<rect x="269" y="551" width="1" height="3" fill="#ffffff"/>
<rect x="333" y="551" width="1" height="3" fill="#ffffff"/>
<rect x="397" y="551" width="1" height="3" fill="#ffffff"/>
<rect x="461" y="551" width="1" height="3" fill="#ffffff"/>
<rect x="525" y="551" width="1" height="3" fill="#ffffff"/>
<rect x="589" y="551" width="1" height="3" fill="#ffffff"/>
<rect x="653" y="551" width="1" height="3" fill="#ffffff"/>
<polygon points="16,39 23,39 19.5,43" fill="#ffffff" shape-rendering="geometricPrecision"/>
</svg>
<div id="title">EURUSD,H1</div>
<div class="t" style="left:684.6px;top:40px;letter-spacing:-0.2px">1.13460</div>
<div class="t" style="left:684.6px;top:73px;letter-spacing:-0.2px">1.13235</div>
<div class="t" style="left:684.6px;top:106px;letter-spacing:-0.2px">1.13015</div>
<div class="t" style="left:684.6px;top:139px;letter-spacing:-0.2px">1.12790</div>
<div class="t" style="left:684.6px;top:172px;letter-spacing:-0.2px">1.12570</div>
<div class="t" style="left:684.6px;top:205px;letter-spacing:-0.2px">1.12345</div>
<div class="t" style="left:684.6px;top:238px;letter-spacing:-0.2px">1.12125</div>
<div class="t" style="left:684.6px;top:271px;letter-spacing:-0.2px">1.11905</div>
<div class="t" style="left:684.6px;top:304px;letter-spacing:-0.2px">1.11680</div>
<div class="t" style="left:684.6px;top:337px;letter-spacing:-0.2px">1.11460</div>
<div class="t" style="left:684.6px;top:370px;letter-spacing:-0.2px">1.11235</div>
<div class="t" style="left:683px;top:382px;letter-spacing:-0.3px">100</div>
<div class="t" style="left:681.8px;top:427px;letter-spacing:-0.3px">70</div>
<div class="t" style="left:681.8px;top:444px;letter-spacing:-0.3px">60</div>
<div class="t" style="left:681.8px;top:461px;letter-spacing:-0.3px">50</div>
<div class="t" style="left:681.8px;top:478px;letter-spacing:-0.3px">40</div>
<div class="t" style="left:683px;top:539px;letter-spacing:-0.3px">0</div>
<div class="t" style="left:13px;top:555px;letter-spacing:-0.3px">24 Jan 2022</div>
<div class="t" style="left:77px;top:555px;letter-spacing:-0.3px">24 Jan 13:00</div>
<div class="t" style="left:141px;top:555px;letter-spacing:-0.3px">24 Jan 21:00</div>
<div class="t" style="left:205px;top:555px;letter-spacing:-0.3px">25 Jan 05:00</div>
<div class="t" style="left:269px;top:555px;letter-spacing:-0.3px">25 Jan 13:00</div>
<div class="t" style="left:333px;top:555px;letter-spacing:-0.3px">25 Jan 21:00</div>
<div class="t" style="left:397px;top:555px;letter-spacing:-0.3px">26 Jan 05:00</div>
<div class="t" style="left:461px;top:555px;letter-spacing:-0.3px">26 Jan 13:00</div>
<div class="t" style="left:525px;top:555px;letter-spacing:-0.3px">26 Jan 21:00</div>
<div class="t" style="left:589px;top:555px;letter-spacing:-0.3px">27 Jan 05:00</div>
<div class="t" style="left:653px;top:555px;letter-spacing:-0.3px">27 Jan 13:00</div>
<div class="t" style="left:17px;top:384px;letter-spacing:-0.12px">RSI(14) 56.7764</div>
<div class="t" style="left:28.3px;top:36px;letter-spacing:0.03px">EURUSD,H1</div>
<div class="t" style="left:87.2px;top:36px;letter-spacing:-0.15px">0.97851</div>
<div class="t" style="left:123.4px;top:36px;letter-spacing:-0.15px">0.98177</div>
<div class="t" style="left:159.60000000000002px;top:36px;letter-spacing:-0.15px">0.97838</div>
<div class="t" style="left:195.8px;top:36px;letter-spacing:-0.15px">0.98177</div>
<svg width="737" height="582" viewBox="0 0 737 582">
<g shape-rendering="geometricPrecision">
<polygon points="29.00,56.20 30.77,60.43 35.32,59.85 32.55,63.50 35.32,67.15 30.77,66.57 29.00,70.80 27.23,66.57 22.68,67.15 25.45,63.50 22.68,59.85 27.22,60.43" fill="#ffff00"/>
<polygon points="53.00,55.20 54.77,59.43 59.32,58.85 56.55,62.50 59.32,66.15 54.77,65.57 53.00,69.80 51.23,65.57 46.68,66.15 49.45,62.50 46.68,58.85 51.23,59.43" fill="#ffff00"/>
<polygon points="68.80,60.20 70.58,64.43 75.12,63.85 72.35,67.50 75.12,71.15 70.58,70.57 68.80,74.80 67.02,70.57 62.48,71.15 65.25,67.50 62.48,63.85 67.02,64.43" fill="#ffff00"/>
<polygon points="229.00,84.70 230.78,88.93 235.32,88.35 232.55,92.00 235.32,95.65 230.78,95.07 229.00,99.30 227.22,95.07 222.68,95.65 225.45,92.00 222.68,88.35 227.22,88.93" fill="#ffff00"/>
<polygon points="436.50,106.20 438.27,110.43 442.82,109.85 440.05,113.50 442.82,117.15 438.27,116.57 436.50,120.80 434.73,116.57 430.18,117.15 432.95,113.50 430.18,109.85 434.73,110.43" fill="#ffff00"/>
<polygon points="492.50,120.20 494.27,124.43 498.82,123.85 496.05,127.50 498.82,131.15 494.27,130.57 492.50,134.80 490.73,130.57 486.18,131.15 488.95,127.50 486.18,123.85 490.73,124.43" fill="#ffff00"/>
<polygon points="524.70,102.10 526.48,106.33 531.02,105.75 528.25,109.40 531.02,113.05 526.48,112.47 524.70,116.70 522.93,112.47 518.38,113.05 521.15,109.40 518.38,105.75 522.93,106.33" fill="#ffff00"/>
<polygon points="37.50,75.20 27.90,66.40 27.90,62.00 36.00,70.00 36.00,53.70 39.00,53.70 39.00,70.00 47.10,61.80 47.10,66.20" fill="#ffff00"/>
<polygon points="61.50,56.00 51.90,47.20 51.90,42.80 60.00,50.80 60.00,34.50 63.00,34.50 63.00,50.80 71.10,42.60 71.10,47.00" fill="#ffff00"/>
<polygon points="77.50,76.50 67.90,67.70 67.90,63.30 76.00,71.30 76.00,55.00 79.00,55.00 79.00,71.30 87.10,63.10 87.10,67.50" fill="#ffff00"/>
<polygon points="237.50,86.30 227.90,77.50 227.90,73.10 236.00,81.10 236.00,64.80 239.00,64.80 239.00,81.10 247.10,72.90 247.10,77.30" fill="#ffff00"/>
<polygon points="445.50,121.50 435.90,112.70 435.90,108.30 444.00,116.30 444.00,100.00 447.00,100.00 447.00,116.30 455.10,108.10 455.10,112.50" fill="#ffff00"/>
<polygon points="501.50,128.70 491.90,119.90 491.90,115.50 500.00,123.50 500.00,107.20 503.00,107.20 503.00,123.50 511.10,115.30 511.10,119.70" fill="#ffff00"/>
<polygon points="533.50,176.40 523.90,167.60 523.90,163.20 532.00,171.20 532.00,154.90 535.00,154.90 535.00,171.20 543.10,163.00 543.10,167.40" fill="#ffff00"/>
</g>
</svg>
</div>
</body></html>
